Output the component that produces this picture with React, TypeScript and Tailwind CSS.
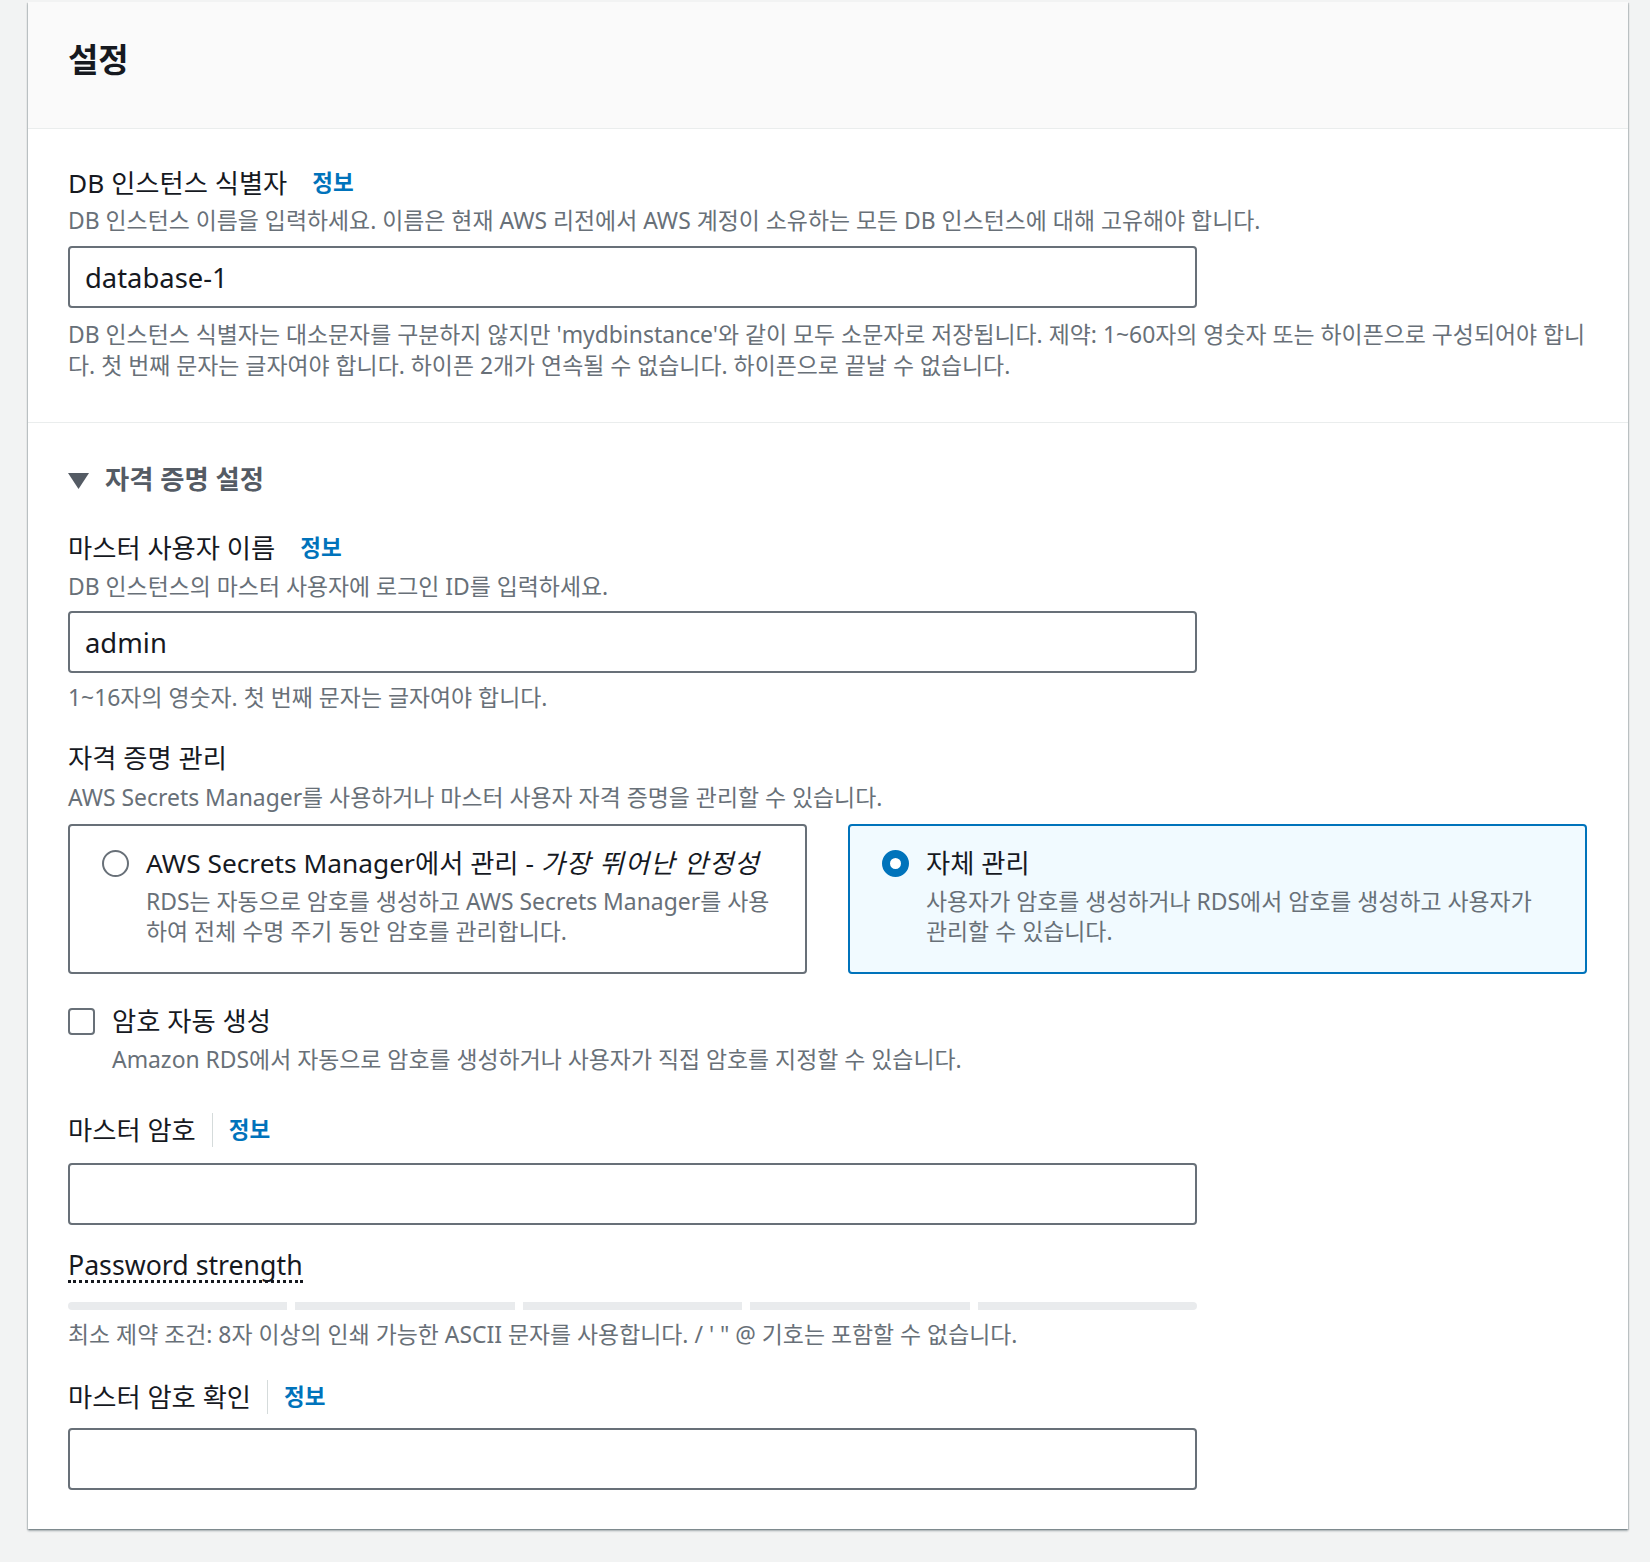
import React from "react";

const Info = () => (
  <span className="text-[22.5px] font-bold leading-[32px] text-[#0073bb]">정보</span>
);

const Label = ({ text, divider = false }: { text: string; divider?: boolean }) => (
  <div className="flex items-center leading-[32px]">
    <span className="text-[26.3px]">{text}</span>
    {divider ? (
      <span className="ml-[16px] mr-[16px] h-[34px] border-l border-[#d5dbdb]" />
    ) : (
      <span className="w-[25px]" />
    )}
    <Info />
  </div>
);

const Desc = ({ children, className = "" }: { children: React.ReactNode; className?: string }) => (
  <p className={`text-[22.9px] leading-[28px] text-[#687078] ${className}`}>{children}</p>
);

const TextInput = ({ value, className = "" }: { value?: string; className?: string }) => (
  <input
    readOnly
    defaultValue={value}
    className={`block h-[62px] w-[1129px] rounded-[4px] border-2 border-[#687078] bg-white px-[15px] text-[27.4px] text-[#16191f] outline-none ${className}`}
  />
);

export default function App() {
  return (
    <div className="min-h-[1562px] bg-[#f2f3f3] pl-[28px] pt-[2px] font-['Noto_Sans','Noto_Sans_CJK_KR',sans-serif] text-[#16191f]">
      <div className="w-[1600px] bg-white shadow-[0_2px_2px_0_rgba(0,28,36,0.3),1px_1px_1px_0_rgba(0,28,36,0.15),-1px_1px_1px_0_rgba(0,28,36,0.15)]">
        {/* header */}
        <div className="h-[127px] border-b border-[#eaeded] bg-[#fafafa] px-[40px] pt-[38px]">
          <h2 className="text-[33px] font-bold leading-[40px]">설정</h2>
        </div>

        {/* instance identifier */}
        <div className="border-b border-[#eaeded] px-[40px] pb-[41px] pt-[38px]">
          <Label text="DB 인스턴스 식별자" />
          <Desc className="mt-[8px]">
            DB 인스턴스 이름을 입력하세요. 이름은 현재 AWS 리전에서 AWS 계정이 소유하는 모든 DB 인스턴스에 대해 고유해야 합니다.
          </Desc>
          <TextInput value="database-1" className="mt-[11px] h-[61px]" />
          <p className="mt-[11px] text-[22.9px] leading-[31px] text-[#687078]">
            DB 인스턴스 식별자는 대소문자를 구분하지 않지만 'mydbinstance'와 같이 모두 소문자로 저장됩니다. 제약: 1~60자의 영숫자 또는 하이픈으로 구성되어야 합니다. 첫 번째 문자는 글자여야 합니다. 하이픈 2개가 연속될 수 없습니다. 하이픈으로 끝날 수 없습니다.
          </p>
        </div>

        {/* credentials */}
        <div className="px-[40px] pb-[39px] pt-[40px]">
          <div className="flex items-center gap-[16px] leading-[32px] text-[#545b64]">
            <svg width="21" height="17" viewBox="0 0 21 17" className="mt-[2px]">
              <polygon points="0,1 21,1 10.5,17" fill="#545b64" />
            </svg>
            <span className="text-[26.3px] font-bold">자격 증명 설정</span>
          </div>

          <div className="mt-[37px]">
            <Label text="마스터 사용자 이름" />
          </div>
          <Desc className="mt-[9px]">DB 인스턴스의 마스터 사용자에 로그인 ID를 입력하세요.</Desc>
          <TextInput value="admin" className="mt-[10px]" />
          <Desc className="mt-[11px]">1~16자의 영숫자. 첫 번째 문자는 글자여야 합니다.</Desc>

          <div className="mt-[30px] text-[26.3px] leading-[32px]">자격 증명 관리</div>
          <Desc className="mt-[10px]">AWS Secrets Manager를 사용하거나 마스터 사용자 자격 증명을 관리할 수 있습니다.</Desc>

          <div className="mt-[12px] grid w-[1519px] grid-cols-2 gap-[41px]">
            <div className="flex h-[150px] rounded-[4px] border-2 border-[#687078] pl-[32px] pr-[30px] pt-[21px]">
              <div className="flex h-[32px] shrink-0 items-center">
                <span className="block h-[27px] w-[27px] rounded-full border-2 border-[#687078] bg-white" />
              </div>
              <div className="ml-[17px]">
                <div className="text-[26.3px] leading-[32px]">
                  AWS Secrets Manager에서 관리 - <i className="tracking-[1.2px]">가장 뛰어난 안정성</i>
                </div>
                <p className="mt-[8px] text-[22.9px] leading-[30px] text-[#687078]">
                  RDS는 자동으로 암호를 생성하고 AWS Secrets Manager를 사용하여 전체 수명 주기 동안 암호를 관리합니다.
                </p>
              </div>
            </div>
            <div className="flex h-[150px] rounded-[4px] border-2 border-[#0073bb] bg-[#f1faff] pl-[32px] pr-[30px] pt-[21px]">
              <div className="flex h-[32px] shrink-0 items-center">
                <span className="block h-[27px] w-[27px] rounded-full border-[8px] border-[#0073bb] bg-white" />
              </div>
              <div className="ml-[17px]">
                <div className="text-[26.3px] leading-[32px]">자체 관리</div>
                <p className="mt-[8px] text-[22.9px] leading-[30px] text-[#687078]">
                  사용자가 암호를 생성하거나 RDS에서 암호를 생성하고 사용자가 관리할 수 있습니다.
                </p>
              </div>
            </div>
          </div>

          <div className="mt-[31px] flex">
            <div className="flex h-[32px] w-[28px] shrink-0 items-center">
              <span className="block h-[27px] w-[27px] rounded-[4px] border-2 border-[#687078] bg-white" />
            </div>
            <div className="ml-[16px]">
              <div className="text-[26.3px] leading-[32px]">암호 자동 생성</div>
              <Desc className="mt-[9px]">Amazon RDS에서 자동으로 암호를 생성하거나 사용자가 직접 암호를 지정할 수 있습니다.</Desc>
            </div>
          </div>

          <div className="mt-[39px]">
            <Label text="마스터 암호" divider />
          </div>
          <TextInput className="mt-[16px]" />

          <div className="mt-[25px]">
            <span className="inline-block border-b-[3px] border-dotted border-[#16191f] text-[26.7px] leading-[30px]">
              Password strength
            </span>
          </div>
          <div className="mt-[19px] flex w-[1129px] gap-[8px]">
            <div className="h-[8px] flex-1 rounded-l-full bg-[#e9ebed]" />
            <div className="h-[8px] flex-1 bg-[#e9ebed]" />
            <div className="h-[8px] flex-1 bg-[#e9ebed]" />
            <div className="h-[8px] flex-1 bg-[#e9ebed]" />
            <div className="h-[8px] flex-1 rounded-r-full bg-[#e9ebed]" />
          </div>
          <Desc className="mt-[11px]">최소 제약 조건: 8자 이상의 인쇄 가능한 ASCII 문자를 사용합니다. / ' " @ 기호는 포함할 수 없습니다.</Desc>

          <div className="mt-[31px]">
            <Label text="마스터 암호 확인" divider />
          </div>
          <TextInput className="mt-[14px] h-[61px]" />
        </div>
      </div>
    </div>
  );
}
